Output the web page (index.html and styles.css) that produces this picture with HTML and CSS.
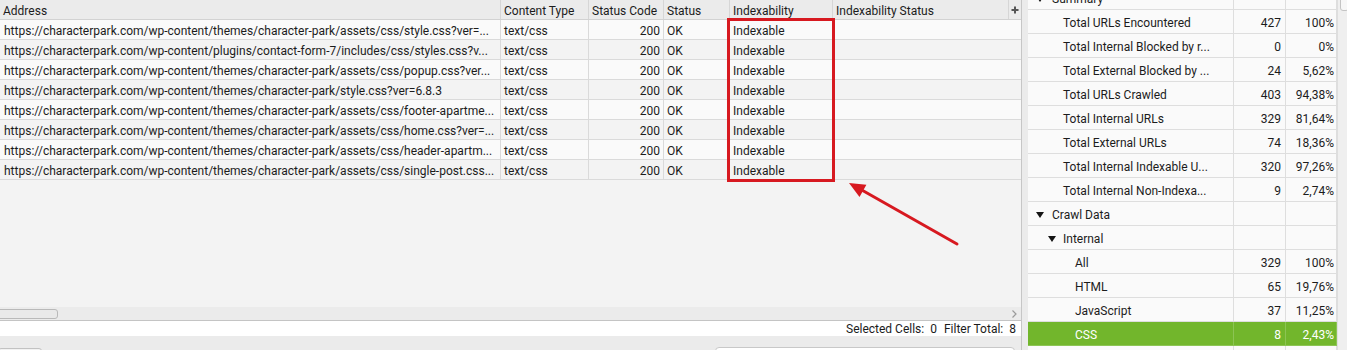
FILE: index.html
```html
<!DOCTYPE html>
<html>
<head>
<meta charset="utf-8">
<link rel="stylesheet" href="styles.css">
</head>
<body>
<div class="app">
  <div class="left">
    <div class="tablearea">
      <div class="hrow">
        <div class="hc">Address</div>
        <div class="hc">Content Type</div>
        <div class="hc">Status Code</div>
        <div class="hc">Status</div>
        <div class="hc">Indexability</div>
        <div class="hc">Indexability Status</div>
        <div class="hc plus"><svg width="8" height="8" viewBox="0 0 8 8"><path d="M4 0.5V7.5M0.5 4H7.5" stroke="#555" stroke-width="2"/></svg></div>
      </div>
      <div class="row">
        <div class="c">https://characterpark.com/wp-content/themes/character-park/assets/css/style.css?ver=...</div>
        <div class="c">text/css</div><div class="c num">200</div><div class="c">OK</div><div class="c">Indexable</div><div class="c last"></div>
      </div>
      <div class="row">
        <div class="c">https://characterpark.com/wp-content/plugins/contact-form-7/includes/css/styles.css?v...</div>
        <div class="c">text/css</div><div class="c num">200</div><div class="c">OK</div><div class="c">Indexable</div><div class="c last"></div>
      </div>
      <div class="row">
        <div class="c">https://characterpark.com/wp-content/themes/character-park/assets/css/popup.css?ver...</div>
        <div class="c">text/css</div><div class="c num">200</div><div class="c">OK</div><div class="c">Indexable</div><div class="c last"></div>
      </div>
      <div class="row">
        <div class="c">https://characterpark.com/wp-content/themes/character-park/style.css?ver=6.8.3</div>
        <div class="c">text/css</div><div class="c num">200</div><div class="c">OK</div><div class="c">Indexable</div><div class="c last"></div>
      </div>
      <div class="row">
        <div class="c">https://characterpark.com/wp-content/themes/character-park/assets/css/footer-apartme...</div>
        <div class="c">text/css</div><div class="c num">200</div><div class="c">OK</div><div class="c">Indexable</div><div class="c last"></div>
      </div>
      <div class="row">
        <div class="c">https://characterpark.com/wp-content/themes/character-park/assets/css/home.css?ver=...</div>
        <div class="c">text/css</div><div class="c num">200</div><div class="c">OK</div><div class="c">Indexable</div><div class="c last"></div>
      </div>
      <div class="row">
        <div class="c">https://characterpark.com/wp-content/themes/character-park/assets/css/header-apartm...</div>
        <div class="c">text/css</div><div class="c num">200</div><div class="c">OK</div><div class="c">Indexable</div><div class="c last"></div>
      </div>
      <div class="row">
        <div class="c">https://characterpark.com/wp-content/themes/character-park/assets/css/single-post.css...</div>
        <div class="c">text/css</div><div class="c num">200</div><div class="c">OK</div><div class="c">Indexable</div><div class="c last"></div>
      </div>
    </div>
    <div class="hscroll">
      <div class="thumb"></div>
      <svg class="arrow-r" width="5" height="8" viewBox="0 0 5 8"><path d="M0.5 0.5L4 4L0.5 7.5" fill="none" stroke="#9a9a9a" stroke-width="1.2"/></svg>
    </div>
    <div class="status">
      <span>Selected Cells:</span><span class="v">0</span><span class="lbl">Filter Total:</span><span class="v">8</span>
    </div>
    <div class="toolbar">
      <div class="tb-left"></div>
      <div class="tb-right"></div>
    </div>
  </div>
  <div class="gutter"></div>
  <div class="right">
    <div class="tree">
      <div class="tr"><div class="n top"><span class="tri"></span>Summary</div><div class="v"></div><div class="p"></div></div>
      <div class="tr"><div class="n l2">Total URLs Encountered</div><div class="v">427</div><div class="p">100%</div></div>
      <div class="tr"><div class="n l2">Total Internal Blocked by r...</div><div class="v">0</div><div class="p">0%</div></div>
      <div class="tr"><div class="n l2">Total External Blocked by ...</div><div class="v">24</div><div class="p">5,62%</div></div>
      <div class="tr"><div class="n l2">Total URLs Crawled</div><div class="v">403</div><div class="p">94,38%</div></div>
      <div class="tr"><div class="n l2">Total Internal URLs</div><div class="v">329</div><div class="p">81,64%</div></div>
      <div class="tr"><div class="n l2">Total External URLs</div><div class="v">74</div><div class="p">18,36%</div></div>
      <div class="tr"><div class="n l2">Total Internal Indexable U...</div><div class="v">320</div><div class="p">97,26%</div></div>
      <div class="tr"><div class="n l2">Total Internal Non-Indexa...</div><div class="v">9</div><div class="p">2,74%</div></div>
      <div class="tr"><div class="n top"><span class="tri"></span>Crawl Data</div><div class="v"></div><div class="p"></div></div>
      <div class="tr"><div class="n mid"><span class="tri"></span>Internal</div><div class="v"></div><div class="p"></div></div>
      <div class="tr"><div class="n l3">All</div><div class="v">329</div><div class="p">100%</div></div>
      <div class="tr"><div class="n l3">HTML</div><div class="v">65</div><div class="p">19,76%</div></div>
      <div class="tr"><div class="n l3">JavaScript</div><div class="v">37</div><div class="p">11,25%</div></div>
      <div class="tr sel"><div class="n l3">CSS</div><div class="v">8</div><div class="p">2,43%</div></div>
      <div class="tr"><div class="n l3"></div><div class="v"></div><div class="p"></div></div>
    </div>
    <div class="vscroll"><div class="vthumb"></div></div>
  </div>
  <div class="highlight"></div>
  <svg class="annot" width="1347" height="350" viewBox="0 0 1347 350">
    <line x1="957" y1="244" x2="860" y2="189" stroke="#d71920" stroke-width="3" stroke-linecap="round"/>
    <polygon points="849,183 866.4,184.8 859.5,197" fill="#d71920"/>
  </svg>
</div>
</body>
</html>
```

FILE: styles.css
```css
* { box-sizing: border-box; }
html, body { margin: 0; padding: 0; }
body {
  width: 1347px;
  height: 350px;
  overflow: hidden;
  font-family: Roboto, "Liberation Sans", sans-serif;
  font-size: 12px;
  color: #1c1c1c;
  background: #ebebeb;
}
.app {
  position: relative;
  display: flex;
  width: 1347px;
  height: 350px;
}
.left {
  width: 1021px;
  display: flex;
  flex-direction: column;
}
.tablearea {
  height: 307px;
  flex-shrink: 0;
  background: #f3f3f3;
  overflow: hidden;
}
.hrow {
  display: grid;
  grid-template-columns: 501px 88px 75px 66px 103px 176px 12px;
  height: 20px;
  background: #ebebeb;
  border-bottom: 1px solid #d2d2d2;
}
.hc {
  border-right: 1px solid #d6d6d6;
  padding: 3px 3px 0;
  line-height: 16px;
  white-space: nowrap;
  overflow: hidden;
}
.hc.plus {
  border-right: none;
  padding: 0;
  display: flex;
  align-items: center;
  justify-content: center;
}
.row {
  display: grid;
  grid-template-columns: 501px 88px 75px 66px 103px 188px;
  height: 20px;
  background: #fafafa;
  border-bottom: 1px solid #dadada;
}
.row:nth-child(odd) { background: #f3f3f3; }
.c {
  border-right: 1px solid #dadada;
  padding: 3px 3px 0;
  line-height: 16px;
  white-space: nowrap;
  overflow: hidden;
}
.c:first-child { padding-left: 4px; }
.c.num { text-align: right; }
.c.last { border-right: none; }
.hscroll {
  height: 14px;
  flex-shrink: 0;
  background: #ebebeb;
  border-bottom: 1px solid #c4c4c4;
  display: flex;
  align-items: center;
  justify-content: space-between;
  padding-right: 4px;
}
.thumb {
  width: 61px;
  height: 10px;
  margin-left: -3px;
  border: 1px solid #b9b9b9;
  border-radius: 3px;
  background: #e9e9e9;
}
.status {
  height: 15px;
  flex-shrink: 0;
  background: #ffffff;
  display: flex;
  justify-content: flex-end;
  align-items: flex-start;
  padding: 2px 5px 0 0;
  line-height: 13px;
}
.status .v { margin-left: 6px; }
.status .lbl { margin-left: 7px; }
.toolbar {
  flex: 1;
  min-height: 0;
  overflow: hidden;
  background: #ebebeb;
  display: flex;
  justify-content: space-between;
  align-items: flex-start;
  padding-right: 6px;
}
.tb-left {
  width: 44px;
  height: 10px;
  flex-shrink: 0;
  margin-top: 12px;
  margin-left: -2px;
  border: 1px solid #c2c2c2;
  border-radius: 3px;
  background: #f2f2f2;
}
.tb-right {
  width: 300px;
  height: 10px;
  flex-shrink: 0;
  margin-top: 11px;
  border: 1px solid #c8c8c8;
  border-radius: 4px;
  background: #ffffff;
}
.gutter {
  width: 7px;
  background: #ebebeb;
  border-left: 1px solid #c6c6c6;
}
.right {
  width: 319px;
  display: flex;
  background: #fafafa;
  overflow: hidden;
}
.tree {
  width: 309px;
  margin-top: -14px;
}
.tr {
  display: grid;
  grid-template-columns: 206px 52px 51px;
  height: 24px;
  border-bottom: 1px solid #dedede;
  background: #fafafa;
}
.tr > div {
  border-right: 1px solid #dedede;
  padding-top: 3px;
  line-height: 20px;
  white-space: nowrap;
  overflow: hidden;
  color: #1c1c1c;
}
.tr .v { text-align: right; padding-right: 4px; }
.tr .p { text-align: right; padding-right: 2px; }
.n.top { padding-left: 8px; }
.n.mid { padding-left: 20px; }
.n.l2 { padding-left: 35px; }
.n.l3 { padding-left: 47px; }
.tri {
  display: inline-block;
  width: 0;
  height: 0;
  border-left: 4px solid transparent;
  border-right: 4px solid transparent;
  border-top: 6px solid #151515;
  margin-right: 8px;
  vertical-align: 1px;
}
.n.mid .tri { margin-right: 7px; }
.tr.sel { background: #72b62c; border-bottom-color: #8cc454; }
.tr.sel > div { color: #ffffff; border-right-color: #8cc454; }
.vscroll {
  width: 10px;
  background: #efefef;
  border-left: 1px solid #dedede;
  position: relative;
}
.vthumb {
  position: absolute;
  left: 2px;
  top: -6px;
  width: 9px;
  height: 17px;
  border: 1px solid #c4c4c4;
  border-radius: 3px;
  background: #f7f7f7;
}
.highlight {
  position: absolute;
  left: 727px;
  top: 18px;
  width: 108px;
  height: 164px;
  border: 3px solid #d71920;
}
.annot {
  position: absolute;
  left: 0;
  top: 0;
  pointer-events: none;
}
```
